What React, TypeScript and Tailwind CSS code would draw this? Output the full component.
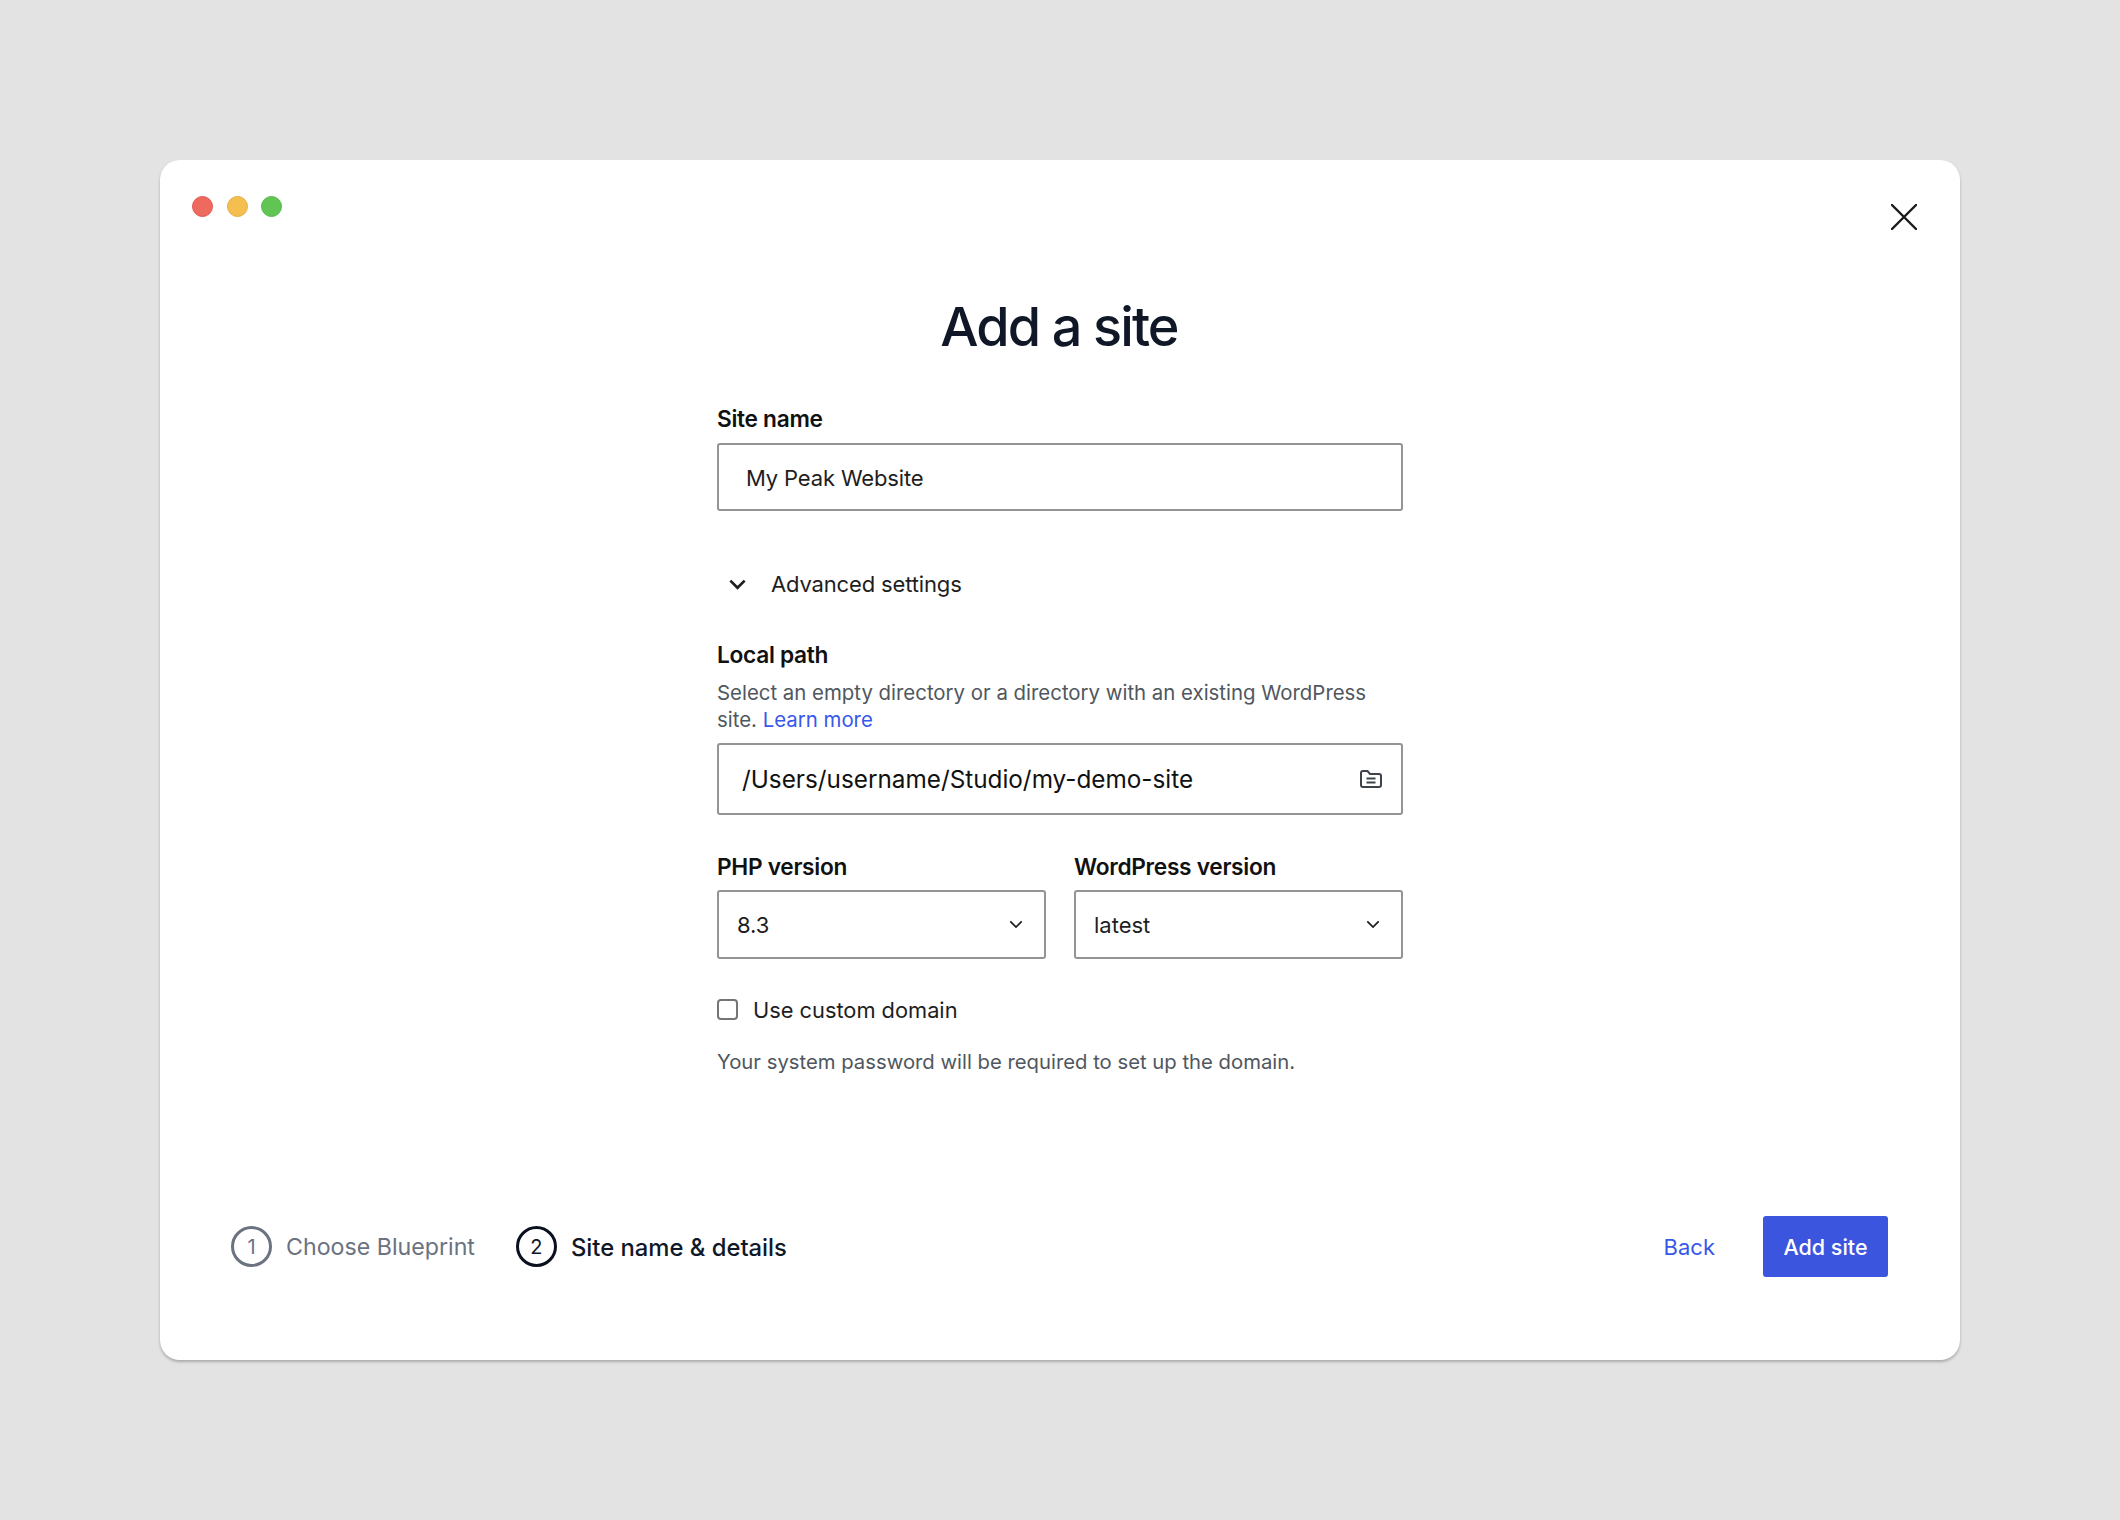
const Chevron = ({ className, width = 2 }: { className: string; width?: number }) => (
  <svg viewBox="0 0 16 10" fill="none" className={className}>
    <path d="M1.5 1.5L8 8l6.5-6.5" stroke="currentColor" strokeWidth={width} />
  </svg>
);

const SelectBox = ({ label, value }: { label: string; value: string }) => (
  <div className="flex-1">
    <div className="h-[32px] text-[22.7px] leading-[32px] font-semibold tracking-[-0.3px] text-[#111111]">{label}</div>
    <div className="mt-[7px] flex h-[69px] items-center justify-between rounded-[3px] border-2 border-[#949494] pl-[18px] pr-[21px] text-[22px] text-[#1e1e1e]">
      <span className="pt-[1px]">{value}</span>
      <Chevron className="h-[9px] w-[14px] text-[#1e1e1e]" />
    </div>
  </div>
);

const Step = ({ n, text, active }: { n: number; text: string; active?: boolean }) => (
  <div className={`flex items-center gap-[14px] ${active ? 'text-[#101828]' : 'text-[#6b7280]'}`}>
    <div
      className={`flex h-[41px] w-[41px] items-center justify-center rounded-full border-[3px] text-[20px] ${
        active ? 'border-[#0b1020]' : 'border-[#6b7280]'
      }`}
    >
      {n}
    </div>
    <span className={`pt-[2px] ${active ? 'text-[23.8px] font-medium' : 'text-[23.2px]'}`}>{text}</span>
  </div>
);

export default function App() {
  return (
    <div className="min-h-[1520px] bg-[#e3e3e3] px-[160px] py-[160px] font-['Inter',sans-serif] antialiased">
      <div className="flex h-[1200px] w-[1800px] flex-col rounded-[20px] bg-white shadow-[0_2px_3px_rgba(0,0,0,0.25)]">
        <div className="flex h-[100px] justify-between pl-[32px] pr-[43px]">
          <div className="flex gap-[13.5px] pt-[36px]">
            <div className="h-[21px] w-[21px] rounded-full border border-[#e0564f] bg-[#ee6a5f]" />
            <div className="h-[21px] w-[21px] rounded-full border border-[#e5ac45] bg-[#f5bf4f]" />
            <div className="h-[21px] w-[21px] rounded-full border border-[#55b84a] bg-[#61c554]" />
          </div>
          <svg viewBox="0 0 26 26" fill="none" className="mt-[44px] h-[26px] w-[26px] text-[#1a1a1a]">
            <path d="M1 1l24 24M25 1L1 25" stroke="currentColor" strokeWidth="2.4" strokeLinecap="round" />
          </svg>
        </div>

        <div className="mx-auto flex w-[686px] flex-col">
          <h1 className="mt-[32px] h-[70px] pr-[2px] text-center text-[54px] leading-[70px] font-[550] tracking-[-1.9px] text-[#101828]">
            Add a site
          </h1>

          <label className="mt-[41px] h-[32px] text-[22.7px] leading-[32px] font-semibold tracking-[-0.3px] text-[#111111]">Site name</label>
          <input
            readOnly
            value="My Peak Website"
            className="mt-[8px] h-[68px] rounded-[3px] border-2 border-[#949494] px-[27px] pt-[2px] text-[22px] tracking-[-0.15px] text-[#1e1e1e] outline-none"
          />

          <div className="mt-[57px] flex h-[32px] items-center gap-[24px] pl-[11px] text-[22px] tracking-[-0.15px] text-[#1e1e1e]">
            <Chevron className="h-[11px] w-[19px]" width={2.4} />
            <span>Advanced settings</span>
          </div>

          <div className="mt-[39px] h-[32px] text-[22.7px] leading-[32px] font-semibold tracking-[-0.3px] text-[#111111]">Local path</div>
          <p className="mt-[8px] text-[20.4px] leading-[27px] text-[#50575e]">
            Select an empty directory or a directory with an existing WordPress site.{' '}
            <a className="text-[#3858e9]">Learn more</a>
          </p>
          <div className="mt-[10px] flex h-[72px] items-center justify-between rounded-[3px] border-2 border-[#949494] pl-[23px] pr-[19px]">
            <span className="text-[24.3px] text-[#111111]">/Users/username/Studio/my-demo-site</span>
            <svg viewBox="0 0 22 18" fill="none" className="h-[18px] w-[22px] text-[#3c434a]">
              <path
                d="M1 3a2 2 0 0 1 2-2h4.5l2.5 3h9a2 2 0 0 1 2 2v9a2 2 0 0 1-2 2H3a2 2 0 0 1-2-2V3Z"
                stroke="currentColor"
                strokeWidth="2"
              />
              <path d="M6.5 8.5h9M6.5 12.5h9" stroke="currentColor" strokeWidth="2" />
            </svg>
          </div>

          <div className="mt-[36px] flex gap-[28px]">
            <SelectBox label="PHP version" value="8.3" />
            <SelectBox label="WordPress version" value="latest" />
          </div>

          <div className="mt-[40px] flex h-[21px] items-center gap-[15px]">
            <div className="h-[21px] w-[21px] rounded-[4px] border-2 border-[#757575]" />
            <span className="pt-[2px] text-[21.8px] text-[#1e1e1e]">Use custom domain</span>
          </div>
          <p className="mt-[28px] text-[20.3px] leading-[27px] text-[#50575e]">
            Your system password will be required to set up the domain.
          </p>
        </div>

        <div className="mt-auto flex items-center justify-between pb-[83px] pl-[71px] pr-[72px]">
          <div className="flex items-center gap-[41px]">
            <Step n={1} text="Choose Blueprint" />
            <Step n={2} text="Site name & details" active />
          </div>
          <div className="flex items-center gap-[48px]">
            <button className="pt-[2px] text-[22px] text-[#3858e9]">Back</button>
            <button className="h-[61px] w-[125px] rounded-[3px] bg-[#3b55df] pt-[2px] text-[21.5px] font-medium text-white">
              Add site
            </button>
          </div>
        </div>
      </div>
    </div>
  );
}
